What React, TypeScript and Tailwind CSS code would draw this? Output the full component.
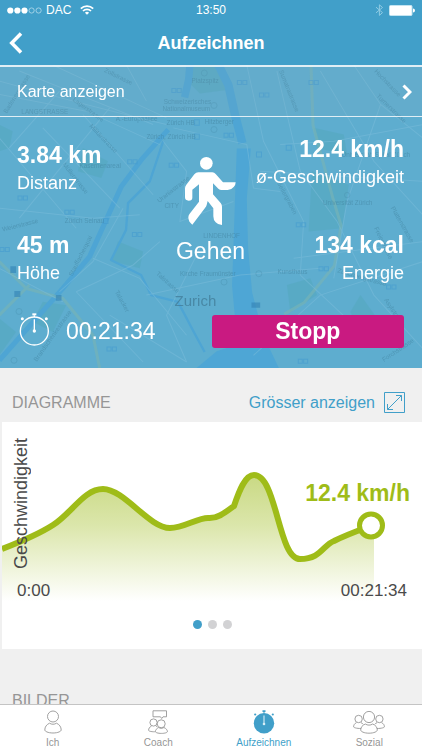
import React from 'react';

const MAP_STREETS = [
  'M0 60 C180 110 330 150 500 190',
  'M0 100 L260 150 L480 250',
  'M60 30 L460 190',
  'M160 12 L500 170',
  'M180 90 L30 260',
  'M250 160 L460 400',
  'M130 200 L360 440',
  'M0 230 L230 500',
  'M330 140 L60 470',
  'M370 440 L280 600 L180 690',
  'M0 440 L280 470 L420 460',
  'M280 590 L420 650 L560 820',
  'M230 690 L400 610 L480 540',
  'M230 690 L430 900',
  'M0 620 L190 720',
  'M490 240 L560 330 L540 480 L700 420',
  'M520 200 L740 250 L760 380 L840 390',
  'M440 700 L720 640 L960 620',
  'M740 12 L790 240 L910 480 L900 640',
  'M830 30 L900 330 L1010 480',
  'M960 30 L1120 300 L1266 460',
  'M1060 12 L1140 130 L1266 230',
  'M840 250 L1000 240 L1266 190',
  'M780 330 L1266 360',
  'M880 590 L1266 540',
  'M1010 480 L1120 700 L1266 860',
  'M900 640 L1060 790',
  'M760 880 L960 700 L1266 600',
  'M330 760 L560 900',
  'M1140 130 L1040 420 L1000 650',
  'M440 120 L380 12',
  'M600 560 L500 760 L560 900',
];

const MAP_LABELS = [
  { text: 'Platzspitz', x: 575, y: 65, rotate: 0 },
  { text: 'Schweizerisches', x: 492, y: 130, rotate: 0 },
  { text: 'Nationalmuseum', x: 488, y: 151, rotate: 0 },
  { text: 'LANGSTRASSE', x: 66, y: 158, rotate: 0 },
  { text: 'Zürich HB', x: 500, y: 190, rotate: 0 },
  { text: 'Hitzberger', x: 614, y: 187, rotate: 0 },
  { text: 'Zürich, Zürich HB', x: 440, y: 232, rotate: 0 },
  { text: 'A.-Europaallee', x: 348, y: 180, rotate: 0 },
  { text: 'Kasernenareal', x: 240, y: 319, rotate: 0 },
  { text: 'Zürich Selnau', x: 196, y: 485, rotate: 0 },
  { text: 'CITY', x: 494, y: 441, rotate: 0 },
  { text: 'LINDENHOF', x: 610, y: 529, rotate: 0 },
  { text: 'Kirche Fraumünster', x: 540, y: 642, rotate: 0 },
  { text: 'Kunsthaus', x: 832, y: 636, rotate: 0 },
  { text: 'Universität Zürich', x: 968, y: 431, rotate: 0 },
  { text: 'UniversitätsSpital Zürich', x: 1024, y: 288, rotate: 0 },
  { text: 'Zollstrasse', x: 312, y: 32, rotate: 26 },
  { text: 'Lagerstrasse', x: 218, y: 118, rotate: 36 },
  { text: 'Militärstrasse', x: 268, y: 196, rotate: 46 },
  { text: 'Müllerstrasse', x: 188, y: 310, rotate: 52 },
  { text: 'Badenerstrasse', x: 22, y: 158, rotate: -58 },
  { text: 'Weierstrasse', x: 10, y: 510, rotate: -14 },
  { text: 'Stauffacherquai', x: 218, y: 645, rotate: -63 },
  { text: 'Brandschenkestrasse', x: 112, y: 900, rotate: -55 },
  { text: 'Uraniastrasse', x: 478, y: 425, rotate: -38 },
  { text: 'Talstrasse', x: 468, y: 638, rotate: 42 },
  { text: 'Sumatrastrasse', x: 836, y: 30, rotate: 68 },
  { text: 'Turnerstrasse', x: 1126, y: 106, rotate: 44 },
  { text: 'Hochstrasse', x: 1120, y: 32, rotate: 46 },
  { text: 'Seilergraben', x: 830, y: 365, rotate: 62 },
  { text: 'Freiestrasse', x: 1120, y: 500, rotate: 64 },
  { text: 'Plattenstrasse', x: 1170, y: 440, rotate: 60 },
  { text: 'Zürichbergstrasse', x: 1010, y: 632, rotate: 16 },
  { text: 'Asylstrasse', x: 1150, y: 715, rotate: 56 },
  { text: 'Forchstrasse', x: 1150, y: 900, rotate: -34 },
  { text: 'Talacker', x: 345, y: 690, rotate: 62 },
];

const MAP_STOPS = [
  [516, 82], [712, 58], [778, 96], [926, 58], [384, 295], [508, 306], [56, 404], [196, 446],
  [398, 513], [888, 484], [956, 615], [1158, 670], [672, 216], [322, 855], [894, 892], [2, 558],
];

const CityMap: React.FC = () => (
  <svg
    className="absolute inset-0 h-full w-full"
    viewBox="0 12 1266 906"
    preserveAspectRatio="xMidYMid slice"
    aria-hidden="true"
  >
    <rect y="12" width="1266" height="906" fill="#5eadcf" />
    <g fill="#54a9bd" opacity="0.5">
      <path d="M575 12h75l30 75-80 10-30-30z" />
      <path d="M250 260l75 40-20 50-70-20z" />
      <path d="M355 540l75 30-10 50-85-22z" />
      <path d="M935 330l110 40-20 130-100 10z" />
      <path d="M860 670l70-20 20 50-80 50z" />
      <path d="M1080 700l50 70-60 30-20-50z" />
      <path d="M0 190l40 20-10 50-30 10z" />
      <path d="M130 720l70 10-40 80-60-30z" />
      <path d="M940 200l90 20 10 60-90-20z" />
      <path d="M0 770l50 40-50 70z" />
    </g>
    <g fill="none" stroke="#4ea5d4" strokeLinejoin="round">
      <path d="M570 12l-4 45-12 52" strokeWidth="22" />
      <path d="M655 12l30 60 20 90 22 84" strokeWidth="25" />
      <path d="M505 205l-80 90-60 80-50 110-45 100-80 95-190 215" strokeWidth="15" />
      <path d="M490 240l-40 120-65 65-6 80-45 90 90 45 30 60 80 20 50 95 30 55" strokeWidth="7" />
    </g>
    <path d="M710 262h42l-12 150 4 150 12 130 34 130 46 96H590l60-50 62-20-16-176z" fill="#4ea6d5" />
    <g fill="none" stroke="#79b4b4" strokeWidth="9" opacity="0.6">
      <path d="M932 12l6 180 60 220 24 80-20 120-90 110-60 35" />
      <path d="M0 600l80 80 110 30 90 110 20 98" />
      <path d="M90 670L0 760" />
    </g>
    <g fill="none" stroke="#7cbddb" strokeWidth="3" opacity="0.5">
      {MAP_STREETS.map((d) => (
        <path key={d} d={d} />
      ))}
    </g>
    <g fill="none" stroke="#459cd0" strokeWidth="3" opacity="0.6">
      {MAP_STOPS.map(([x, y]) => (
        <path key={`${x}-${y}`} d={`M${x} ${y}h12v12h-12zM${x + 16} ${y}h12v12h-12z`} />
      ))}
      <path d="M584 176h14v16h-14zM584 218h14v16h-14zM311 470h14v16h-14zM858 252h15v15h-15zM769 272h15v15h-15z" />
    </g>
    <path d="M33 614h17v20h-17zM45 688h18v18h-18zM169 700h17v17h-17zM754 722h26v16h-26z" fill="#3788b8" opacity="0.7" />
    <g fill="none" stroke="#478eac" strokeWidth="2" opacity="0.5">
      <circle cx="613" cy="36" r="9" />
      <circle cx="642" cy="133" r="9" />
      <circle cx="642" cy="205" r="9" />
      <circle cx="1040" cy="401" r="8" />
      <circle cx="59" cy="749" r="9" />
      <circle cx="44" cy="895" r="9" />
      <circle cx="776" cy="636" r="9" />
      <circle cx="672" cy="661" r="9" />
    </g>
    <g fill="#40809c" opacity="0.5" className="font-['Liberation_Sans',Arial,sans-serif] text-[19px]">
      {MAP_LABELS.map(({ text, x, y, rotate }) => (
        <text key={text} x={x} y={y} transform={`rotate(${rotate} ${x} ${y})`}>
          {text}
        </text>
      ))}
    </g>
    <text x="524" y="734" fill="#437f9b" opacity="0.8" className="font-['Liberation_Sans',Arial,sans-serif] text-[45px]">
      Zurich
    </text>
  </svg>
);

const StatusBar: React.FC = () => (
  <div className="grid h-5 grid-cols-3 items-center pl-[7px] pr-[7px] text-[12px] leading-5">
    <div className="flex items-center">
      <svg className="mr-1 h-[7px] w-[35px]" viewBox="0 0 35 7" fill="#fff" aria-hidden="true">
        <circle cx="3.3" cy="3.5" r="3.1" />
        <circle cx="10.4" cy="3.5" r="3.1" />
        <circle cx="17.5" cy="3.5" r="3.1" />
        <circle cx="24.6" cy="3.5" r="2.6" fill="none" stroke="#b6dcec" strokeWidth="0.8" />
        <circle cx="31.6" cy="3.5" r="2.6" fill="none" stroke="#b6dcec" strokeWidth="0.8" />
      </svg>
      <span>DAC</span>
      <svg className="ml-[9px] h-[10px] w-[14px]" viewBox="0 0 14 10" fill="none" stroke="#fff" strokeWidth="1.7" aria-hidden="true">
        <path d="M0.8 3.6a8.8 8.8 0 0 1 12.4 0" />
        <path d="M3 6a5.7 5.7 0 0 1 8 0" />
        <path d="M7 9.8L4.9 7.7a3 3 0 0 1 4.2 0z" fill="#fff" stroke="none" />
      </svg>
    </div>
    <span className="text-center">13:50</span>
    <div className="flex items-center justify-end gap-[5px]">
      <svg className="h-3 w-[9px]" viewBox="0 0 9 12" fill="none" stroke="#8fcbe4" strokeWidth="1" aria-hidden="true">
        <path d="M1 3.2l6.5 5.4L4.4 11.4V0.8l3.1 2.7L1 8.8" />
      </svg>
      <svg className="h-[11px] w-[26px]" viewBox="0 0 26 11" aria-hidden="true">
        <rect x="0.5" y="0.5" width="22.5" height="10" rx="1" fill="#fff" stroke="#c3e4f1" />
        <path d="M24 3.5a2 2 0 0 1 0 4z" fill="#fff" />
      </svg>
    </div>
  </div>
);

const Stat: React.FC<{ value: string; label: string }> = ({ value, label }) => (
  <div className="flex flex-col gap-[2px]">
    <span className="text-[23px] font-bold leading-7">{value}</span>
    <span className="text-[18px] leading-6">{label}</span>
  </div>
);

const WalkIcon: React.FC = () => (
  <svg className="h-[69px] w-[51px]" viewBox="0 0 153 207" fill="#fff" aria-hidden="true">
    <circle cx="64" cy="19" r="19" />
    <path d="M40 46h42q6 0 10 5l22 25h38q0 8-6 14-7 9-18 9h-18q-6 0-10-4L84 79v33l23 26q4 5 4 11v55q-12 0-19-8-7-7-7-18v-24L68 132l-3 12q-1 5-5 9L22 203q-12-8-12-22 0-6 4-11l28-36V82L22 98v24q0 9-11 9-11 0-11-10V94q0-6 4-11l24-31q5-6 12-6z" />
  </svg>
);

const StopwatchOutline: React.FC = () => (
  <svg className="h-[38px] w-[30px]" viewBox="0 0 90 114" fill="none" stroke="#fff" strokeWidth="4" aria-hidden="true">
    <circle cx="46" cy="57" r="42" />
    <path d="M46 10v6M46 22v34" />
    <path d="M40 4h12v6H40z" fill="#fff" stroke="none" />
    <circle cx="46" cy="57" r="5" fill="#fff" stroke="none" />
    <circle cx="10" cy="20" r="4.5" fill="#fff" stroke="none" />
    <circle cx="82" cy="20" r="4.5" fill="#fff" stroke="none" />
  </svg>
);

const SpeedChart: React.FC = () => {
  const line =
    'M2 548C20 541 39 533 53 524C72 512 84 488 103 488C124 488 149 527 170 527C184 527 197 517 208 517C218 518 227 510 234 505C239 490 245 474 254 474C277 474 278 558 300 558C321 558 323 544 334 540C346 534 357 530 368 526';

  return (
    <div className="relative">
      <svg className="block w-full" viewBox="2 421 420 183" aria-hidden="true">
        <defs>
          <linearGradient id="speedFill" x1="0" y1="474" x2="0" y2="600" gradientUnits="userSpaceOnUse">
            <stop offset="0" stopColor="#c9d983" />
            <stop offset="0.4" stopColor="#dbe6ab" />
            <stop offset="1" stopColor="#ffffff" />
          </linearGradient>
        </defs>
        <path d={`${line}L374 526V600H2z`} fill="url(#speedFill)" />
        <path d={line} fill="none" stroke="#9fbc18" strokeWidth="6" />
        <circle cx="371" cy="524.5" r="11.5" fill="#fff" stroke="#9fbc18" strokeWidth="5" />
      </svg>
      <span className="absolute left-[7px] top-4 rotate-180 text-[18px] leading-6 text-[#4a4a4a] [writing-mode:vertical-rl]">
        Geschwindigkeit
      </span>
      <span className="absolute right-3 top-[57px] text-[23px] font-bold leading-7 text-[#9fbc18]">12.4 km/h</span>
      <div className="absolute bottom-[2px] left-0 right-0 flex justify-between px-[15px] text-[17px] leading-6 text-[#4a4a4a]">
        <span>0:00</span>
        <span>00:21:34</span>
      </div>
    </div>
  );
};

const tabs = [
  {
    label: 'Ich',
    active: false,
    icon: (
      <svg className="h-6 w-[18px]" viewBox="0 0 18 24" fill="none" stroke="currentColor" strokeWidth="0.9">
        <circle cx="9" cy="6.5" r="5.5" />
        <path d="M5.5 13.2C2.5 14.5 0.8 17 0.8 20c0 1.2 3 3 8.2 3s8.2-1.8 8.2-3c0-3-1.7-5.500-4.700-6.800-2 1.400-5 1.400-7 0z" />
      </svg>
    ),
  },
  {
    label: 'Coach',
    active: false,
    icon: (
      <svg className="h-6 w-5" viewBox="0 0 20 24" fill="none" stroke="currentColor" strokeWidth="0.9">
        <path d="M5 0.8h13.5v6h-3.5l-1.3 1.7-1.2-1.7H5z" />
        <circle cx="5.5" cy="12.5" r="3.6" />
        <path d="M3.6 16C1.5 17 0.6 18.6 0.6 20.3c0 0.7 2.2 1.5 6.2 1.5M7.8 15.9l1.4 0.8" />
        <circle cx="13.2" cy="13.8" r="4" />
        <path d="M10.7 17.5C8.5 18.5 7.4 20 7.4 21.7c0 0.8 2.5 1.7 6 1.7s6-0.9 6-1.7c0-1.7-1.2-3.2-3.5-4.2-1.5 1.1-3.7 1.1-5.2 0z" />
      </svg>
    ),
  },
  {
    label: 'Aufzeichnen',
    active: true,
    icon: (
      <svg className="h-6 w-[22px]" viewBox="0 0 22 24" fill="currentColor">
        <circle cx="11" cy="13.3" r="10.2" />
        <path d="M9.5 0.3h3v1.6h-3zM10.500 1.500h1v2h-1z" />
        <circle cx="2.2" cy="4.5" r="1.1" />
        <circle cx="19.8" cy="4.5" r="1.1" />
        <path d="M11 5.5v8" stroke="#d9eef7" strokeWidth="1.1" />
        <circle cx="11" cy="14" r="1.3" fill="#d9eef7" />
      </svg>
    ),
  },
  {
    label: 'Sozial',
    active: false,
    icon: (
      <svg className="h-6 w-8" viewBox="0 0 32 24" fill="none" stroke="currentColor" strokeWidth="0.9">
        <circle cx="16" cy="7" r="5.6" />
        <path d="M12.3 14C9.2 15.2 7.7 17.5 7.7 20c0 1.5 3.3 3.2 8.3 3.2s8.3-1.7 8.3-3.2c0-2.5-1.5-4.8-4.6-6-2.2 1.5-5.2 1.5-7.4 0z" />
        <circle cx="5.6" cy="9" r="3.7" />
        <path d="M3.4 12.7C1.6 13.5 0.6 15 0.6 16.8c0 0.8 2.8 1.7 7.6 1.7M8 12.7c1 0.4 1.7 0.9 2.2 1.5" />
        <circle cx="26.4" cy="9" r="3.7" />
        <path d="M28.6 12.7c1.8 0.8 2.8 2.3 2.8 4.1 0 0.8-2.8 1.7-7.6 1.7M24 12.7c-1 0.4-1.7 0.9-2.2 1.5" />
      </svg>
    ),
  },
];

const App: React.FC = () => {
  return (
    <div className="flex h-screen flex-col bg-[#f0f0f0] font-['Liberation_Sans',Arial,sans-serif]">
      <header className="shrink-0 bg-[#419fc9] text-white">
        <StatusBar />
        <div className="grid h-[45px] grid-cols-[1fr_auto_1fr] items-center">
          <button aria-label="Zurück" className="w-fit pl-[9px]">
            <svg className="h-[22px] w-[14px]" viewBox="0 0 14 22" fill="none" stroke="currentColor" strokeWidth="3.5" aria-hidden="true">
              <path d="M12 1.500L2.700 11l9.300 9.500" />
            </svg>
          </button>
          <h1 className="text-[18px] font-bold leading-6">Aufzeichnen</h1>
        </div>
      </header>

      <main className="min-h-0 flex-1 overflow-y-auto [scrollbar-width:none]">
        <section className="relative text-white">
          <CityMap />
          <div className="relative">
            <button className="flex h-[52px] w-full items-center justify-between border-b border-t-2 border-white/80 bg-[#7fa9bd]/15 pl-[17px] pr-[10px] text-[16px] leading-6">
              <span>Karte anzeigen</span>
              <svg className="h-4 w-[10px]" viewBox="0 0 10 16" fill="none" stroke="currentColor" strokeWidth="3" aria-hidden="true">
                <path d="M1.5 1.5L8 8l-6.5 6.5" />
              </svg>
            </button>

            <div className="grid grid-cols-[1fr_auto_1fr] pl-[17px] pr-[18px] pt-[18px]">
              <div className="flex flex-col justify-between pt-[6px]">
                <Stat value="3.84 km" label="Distanz" />
                <Stat value="45 m" label="Höhe" />
              </div>
              <div className="flex flex-col items-center pt-[22px]">
                <WalkIcon />
                <span className="mt-[11px] text-[23px] leading-7">Gehen</span>
              </div>
              <div className="flex flex-col gap-[42px] text-right">
                <Stat value="12.4 km/h" label="ø-Geschwindigkeit" />
                <Stat value="134 kcal" label="Energie" />
              </div>
            </div>

            <div className="flex items-center justify-between pb-[18px] pl-[19px] pr-[18px] pt-[27px]">
              <div className="flex items-center gap-[17px]">
                <StopwatchOutline />
                <span className="text-[23px] leading-7">00:21:34</span>
              </div>
              <button className="h-[33px] w-1/2 rounded-[3px] bg-[#c91a81] text-[23px] font-bold leading-7">Stopp</button>
            </div>
          </div>
        </section>

        <section>
          <div className="flex h-[54px] items-center justify-between pl-3 pr-[17px] pt-[15px]">
            <h2 className="text-[16px] leading-6 text-[#969696]">DIAGRAMME</h2>
            <button className="flex items-center gap-[9px] text-[16px] leading-6 text-[#419fc9]">
              <span>Grösser anzeigen</span>
              <svg className="h-[21px] w-[21px]" viewBox="0 0 21 21" fill="none" stroke="currentColor" strokeWidth="1" aria-hidden="true">
                <path d="M0.5 0.5h20v20h-20zM3.5 17.500l14-14M12 3.500h5.500V9M3.500 12v5.500H9" />
              </svg>
            </button>
          </div>
          <div className="ml-[2px] bg-white">
            <SpeedChart />
            <div className="flex justify-center gap-[6px] pb-5 pt-[15px]">
              <span className="h-[9px] w-[9px] rounded-full bg-[#419fc9]" />
              <span className="h-[9px] w-[9px] rounded-full bg-[#d2d2d4]" />
              <span className="h-[9px] w-[9px] rounded-full bg-[#d2d2d4]" />
            </div>
          </div>
        </section>

        <section className="pl-3 pt-10">
          <h2 className="text-[16px] leading-6 text-[#969696]">BILDER</h2>
        </section>
      </main>

      <nav className="grid shrink-0 grid-cols-4 border-t border-[#c4c4c4] bg-white pb-[1px] pt-[5px]">
        {tabs.map(({ label, active, icon }) => (
          <button
            key={label}
            className={`flex flex-col items-center gap-[3px] text-[10px] leading-3 ${active ? 'text-[#419fc9]' : 'text-[#969696]'}`}
          >
            {icon}
            <span>{label}</span>
          </button>
        ))}
      </nav>
    </div>
  );
};

export default App;
